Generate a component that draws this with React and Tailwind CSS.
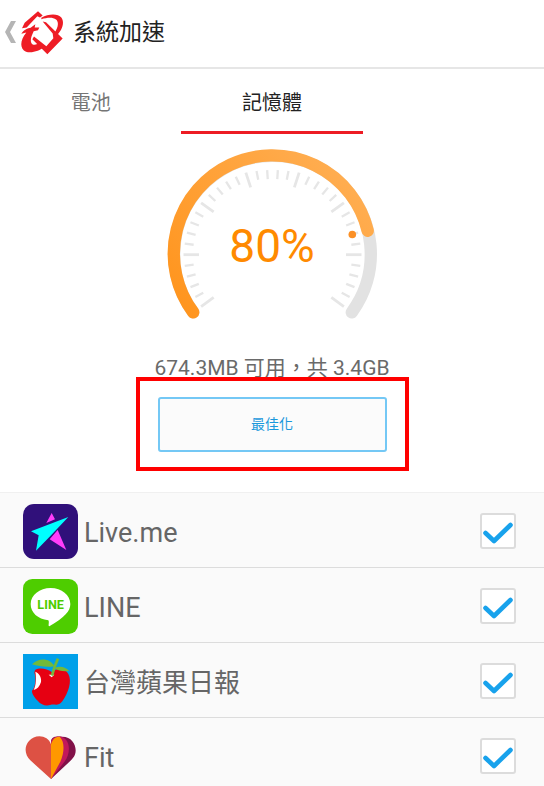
import React from "react";

const TRACK = "M193.2 311.3 A98.3 98.3 0 1 1 351.8 311.3";
const TICKS = Array.from({ length: 36 }, (_, i) => {
  const angle = ((144 + i * 7.2) * Math.PI) / 180;
  const long = i % 5 === 0;
  const outer = 85 + 4 * Math.abs(Math.cos(angle)) - (long ? 0 : 0.5);
  const inner = outer - (long ? 15.5 : 9);
  return {
    long,
    x1: 272.5 + outer * Math.cos(angle),
    y1: 253.7 + outer * Math.sin(angle),
    x2: 272.5 + inner * Math.cos(angle),
    y2: 253.7 + inner * Math.sin(angle),
  };
});

function Gauge() {
  return (
    <svg viewBox="166 147 213 173" className="h-[173px] w-[213px]" aria-hidden="true">
      <defs>
        <linearGradient id="heat" x1="0" y1="1" x2="1" y2="0.3">
          <stop offset="0" stopColor="#ff941c" />
          <stop offset="1" stopColor="#ffad50" />
        </linearGradient>
      </defs>
      {TICKS.map((t, i) => (
        <line key={i} x1={t.x1} y1={t.y1} x2={t.x2} y2={t.y2} stroke="#e6e6e6" strokeWidth={t.long ? 2.8 : 2.3} />
      ))}
      <path d={TRACK} fill="none" stroke="#e2e2e2" strokeWidth="12.4" strokeLinecap="round" />
      <path d="M193.2 311.3 A98.3 98.3 0 1 1 367.7 229.8" fill="none" stroke="url(#heat)" strokeWidth="12.4" strokeLinecap="round" />
      <circle cx="352.3" cy="233.5" r="3.8" fill="#fb9026" />
    </svg>
  );
}

function BrandLogo() {
  return (
    <svg viewBox="60 28 132 134" className="h-[45px] w-[44px]" fill="#ee1c25" aria-hidden="true">
      <path d="M66 82 L74 66 L114 31 L128 44 L120 50 L112 46 L80 80 Z" />
      <path d="M124 51 C146 38 174 38 184 50 C196 66 184 90 170 104 L162 97 C174 82 178 64 168 56 C158 48 142 50 124 55 Z" />
      <path d="M64 99 C70 88 84 82 92 81 L106 70 L104 80 L118 80 L114 88 L101 91 C94 106 88 122 97 130 C104 134 112 130 120 126 L132 138 C120 150 96 158 78 153 C58 144 60 118 79 95 Z" />
      <path d="M128 62 L138 64 L188 113 L142 160 L97 115 L102 107 L139 136 L160 112 L158 98 Z" />
    </svg>
  );
}

function LiveMeIcon() {
  return (
    <svg viewBox="0 0 165 165" className="size-[55px]" aria-hidden="true">
      <rect width="165" height="165" rx="33" fill="#30107a" />
      <path d="M86 27 L96 46 L70 57 Z M104 78 L130 138 L80 106 Z" fill="#ff3dfa" />
      <path d="M136 39 L82 96 L39 140 L47 94 L24 82 Z" fill="#0ff" />
    </svg>
  );
}

function LineIcon() {
  return (
    <svg viewBox="0 0 165 165" className="size-[55px]" aria-hidden="true">
      <rect width="165" height="165" rx="28" fill="#4ecd00" />
      <path d="M83 27 C116 27 142 48 142 75 C142 96 126 114 79 142 C74 142 80 130 76 124 C44 120 23 101 23 75 C23 48 50 27 83 27 Z" fill="#fff" />
      <text x="83" y="90" textAnchor="middle" fontSize="38" fontWeight="700" fill="#4ecd00" className="font-[Roboto]">LINE</text>
    </svg>
  );
}

function AppleIcon() {
  return (
    <svg viewBox="0 0 165 165" className="size-[55px]" aria-hidden="true">
      <rect width="165" height="165" fill="#00a0e9" />
      <path d="M36 48 C50 40 72 44 86 54 C104 40 126 42 136 60 C148 82 136 116 118 142 C106 158 96 150 84 152 C70 157 56 154 44 140 C34 130 26 118 27 110 C38 100 40 70 34 56 Z" fill="#e60012" />
      <path d="M37 53 C50 58 56 72 54 84 C50 98 42 106 32 108 C40 92 40 70 37 53 Z M77 62 L94 62 L86 70 Z" fill="#fff" />
      <path d="M27 31 C46 12 78 10 94 36 C76 42 46 36 27 31 Z M94 42 C110 34 128 38 139 51 C120 54 106 50 94 42 Z" fill="#72b93b" />
      <path d="M105 14 C98 28 92 44 87 65" fill="none" stroke="#72b93b" strokeWidth="8" />
    </svg>
  );
}

function FitIcon() {
  return (
    <svg viewBox="0 0 165 165" className="size-[55px]" aria-hidden="true">
      <path d="M84 36 C88 20 104 23 116 23 C144 22 158 44 158 64 C158 80 150 88 144 94 L84 150 Z" fill="#811148" />
      <path d="M84 36 C90 22 104 22 116 23 C144 34 142 74 126 96 L84 150 Z" fill="#c2185b" />
      <path d="M84 46 C90 26 100 23 110 23 C126 38 124 72 112 98 L84 150 Z" fill="#ff9800" />
      <path d="M84 46 C76 18 36 14 18 36 C2 54 6 78 22 94 L84 150 Z" fill="#dd5144" />
    </svg>
  );
}

const APPS = [
  { id: "liveme", name: "Live.me", Icon: LiveMeIcon, size: "text-[27px]" },
  { id: "line", name: "LINE", Icon: LineIcon, size: "text-[27px]" },
  { id: "apple", name: "台灣蘋果日報", Icon: AppleIcon, size: "text-[26px]" },
  { id: "fit", name: "Fit", Icon: FitIcon, size: "text-[27px]" },
];

function AppRow({ id, name, Icon, size }) {
  return (
    <li className="h-[75px] shrink-0 border-t border-[#dcdcdc] first:border-[#f0f0f0]">
      <label htmlFor={id} className="flex h-full items-center pt-[2px] pr-7 pl-[23px]">
        <Icon />
        <span className={`ml-[6px] flex-1 pt-[3px] leading-8 text-[#666] ${size}`}>{name}</span>
        <span className="grid">
          <input
            id={id}
            type="checkbox"
            defaultChecked
            className="peer col-start-1 row-start-1 size-9 appearance-none rounded-[3px] border-2 border-[#dcdcdc] bg-white"
          />
          <svg viewBox="0 0 36 36" className="pointer-events-none invisible col-start-1 row-start-1 size-9 peer-checked:visible" aria-hidden="true">
            <path d="M5.5 20 L14 28 L30.5 12" fill="none" stroke="#18a2ec" strokeWidth="4.6" strokeLinecap="round" strokeLinejoin="round" />
          </svg>
        </span>
      </label>
    </li>
  );
}

export default function App() {
  return (
    <div className="flex h-screen flex-col overflow-hidden bg-white font-[Roboto,'Noto_Sans_CJK_TC',sans-serif]">
      <header className="flex h-[69px] shrink-0 items-center border-b-2 border-[#e6e6e6] pb-[3px] pl-[5px]">
        <button type="button" aria-label="返回" className="mr-1 flex">
          <svg viewBox="0 0 11 22" className="h-[22px] w-[11px]" aria-hidden="true">
            <path d="M6 0 H11 L5 11 L11 22 H6 L0 11 Z" fill="#b5b5b5" />
          </svg>
        </button>
        <BrandLogo />
        <h1 className="ml-[9px] pt-[2px] text-[23px] leading-8 text-[#222]">系統加速</h1>
      </header>

      <nav className="grid h-[65px] shrink-0 grid-cols-3 text-[20px]">
        <button type="button" className="border-b-[3px] border-transparent pt-[6px] text-[#757575]">電池</button>
        <button type="button" className="border-b-[3px] border-[#ed1c24] pt-[6px] text-[#222]">記憶體</button>
      </nav>

      <main className="flex shrink-0 flex-col items-center pt-[14px] pb-10">
        <div className="grid place-items-center">
          <div className="col-start-1 row-start-1"><Gauge /></div>
          <p className="col-start-1 row-start-1 pt-[22px] text-[46px] leading-[54px] text-[#ff8a00]">80%</p>
        </div>
        <p className="mt-[33px] text-[21px] leading-7 text-[#6a6a6a]">674.3MB 可用，共 3.4GB</p>
        <div className="relative mt-[15px]">
          <button
            type="button"
            className="h-[55px] w-[229px] rounded-[3px] border-2 border-[#74c8f5] bg-[#fbfbfb] text-[14px] text-[#1a98dc]"
          >
            最佳化
          </button>
          <div className="pointer-events-none absolute -inset-x-[22px] -top-[20px] -bottom-[19px] border-4 border-[#f00]" />
        </div>
      </main>

      <ul className="flex flex-1 flex-col overflow-hidden bg-[#fafafa]">
        {APPS.map((app) => (
          <AppRow key={app.id} {...app} />
        ))}
      </ul>
    </div>
  );
}
